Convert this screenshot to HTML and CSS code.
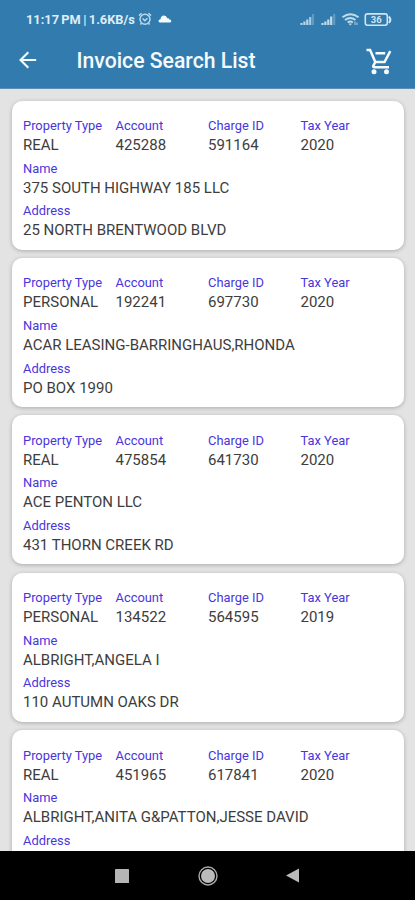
FILE: index.html
```html
<!DOCTYPE html>
<html lang="en">
<head>
<meta charset="utf-8">
<title>Invoice Search List</title>
<link rel="stylesheet" href="styles.css">
</head>
<body>
<div class="phone">
  <header class="top">
    <div class="status">
      <span class="time">11:17 PM | 1.6KB/s</span>
      <svg class="alarm" width="14" height="14" viewBox="0 0 14 14" fill="none" stroke="currentColor"><circle cx="7" cy="7.3" r="5" stroke-width="1.5"/><path d="M1 3.6 3.6 1.2M13 3.6 10.4 1.2M4.6 6.5 6.8 8.7 9.5 6.3M3.4 11.2 2.4 12.5M10.6 11.2l1 1.3" stroke-width="1.5"/></svg>
      <svg class="cloud" width="14" height="10" viewBox="0 0 14 10" fill="currentColor"><path d="M2 8.5Q.3 8.3.5 6.700.8 5.200 2.500 5.200 3 1.500 6 1.500 8.600 1.500 9.300 4.200 11 3.900 11.600 5.500 13.400 5.700 13.300 7.200 13.200 8.500 11.800 8.500Z"/></svg>
      <svg class="system" width="94" height="16" viewBox="0 0 94 16" fill="none" stroke="currentColor">
        <g stroke-width="2.200"><path d="M2.500 14v-2M5.400 14v-3.500M8.300 14V8.500" opacity=".85"/><path d="M11.200 14V6" opacity=".75"/><path d="M14 14V3" opacity=".3"/></g>
        <g stroke-width="2.200"><path d="M23.500 14v-2M26.400 14v-3.500M29.300 14V8.500M32.200 14V5.500" opacity=".9"/><path d="M35.200 14V3" opacity=".3"/></g>
        <g stroke-width="2"><path d="M43.500 6.300Q51.300.3 59.500 6.300M46 9q5.300-4 10.500 0M48.700 11.500q2.600-1.800 5.200 0" opacity=".9"/><path d="M50.200 12.900h2.200l-1.100 1.300zM56 10.500v3.500M58 11.500V14" stroke-width="1" opacity=".8"/></g>
        <path d="M68.500 2.900H86q2.300 0 2.300 2.200v7q0 2.200-2.300 2.200H68.500q-2.200 0-2.200-2.200v-7q0-2.200 2.200-2.200Z" stroke-width="1.600"/><path d="M89.800 5.500q3.200 3.200 0 6.400" stroke-width="2"/>
        <text x="77.300" y="12" text-anchor="middle" class="charge">36</text>
      </svg>
    </div>
    <div class="bar">
      <svg class="back" width="18" height="18" viewBox="0 0 18 18" fill="none" stroke="currentColor" stroke-width="2.100"><path d="M17.200 9H2M9.300 1.200 1.500 9l7.800 7.800"/></svg>
      <h1>Invoice Search List</h1>
      <svg class="cart" width="26" height="27" viewBox="0 0 26 27" fill="none" stroke="currentColor" stroke-width="2.500"><path d="M.5 2h3.600L9.300 14h9.200L24.300 3.200M9.300 14l-2 3.800q-.5 1.400 1.200 1.400H23M9.500 5.200h9.700"/><g fill="currentColor" stroke="none"><circle cx="8" cy="23.800" r="2.500"/><circle cx="20.500" cy="23.800" r="2.500"/></g></svg>
    </div>
  </header>
  <main class="list">
    <article class="card">
      <dl class="grid"><div><dt>Property Type</dt><dd>REAL</dd></div><div><dt>Account</dt><dd>425288</dd></div><div><dt>Charge ID</dt><dd>591164</dd></div><div><dt>Tax Year</dt><dd>2020</dd></div></dl>
      <dl><dt>Name</dt><dd>375 SOUTH HIGHWAY 185 LLC</dd></dl>
      <dl><dt>Address</dt><dd>25 NORTH BRENTWOOD BLVD</dd></dl>
    </article>
    <article class="card">
      <dl class="grid"><div><dt>Property Type</dt><dd>PERSONAL</dd></div><div><dt>Account</dt><dd>192241</dd></div><div><dt>Charge ID</dt><dd>697730</dd></div><div><dt>Tax Year</dt><dd>2020</dd></div></dl>
      <dl><dt>Name</dt><dd>ACAR LEASING-BARRINGHAUS,RHONDA</dd></dl>
      <dl><dt>Address</dt><dd>PO BOX 1990</dd></dl>
    </article>
    <article class="card">
      <dl class="grid"><div><dt>Property Type</dt><dd>REAL</dd></div><div><dt>Account</dt><dd>475854</dd></div><div><dt>Charge ID</dt><dd>641730</dd></div><div><dt>Tax Year</dt><dd>2020</dd></div></dl>
      <dl><dt>Name</dt><dd>ACE PENTON LLC</dd></dl>
      <dl><dt>Address</dt><dd>431 THORN CREEK RD</dd></dl>
    </article>
    <article class="card">
      <dl class="grid"><div><dt>Property Type</dt><dd>PERSONAL</dd></div><div><dt>Account</dt><dd>134522</dd></div><div><dt>Charge ID</dt><dd>564595</dd></div><div><dt>Tax Year</dt><dd>2019</dd></div></dl>
      <dl><dt>Name</dt><dd>ALBRIGHT,ANGELA I</dd></dl>
      <dl><dt>Address</dt><dd>110 AUTUMN OAKS DR</dd></dl>
    </article>
    <article class="card">
      <dl class="grid"><div><dt>Property Type</dt><dd>REAL</dd></div><div><dt>Account</dt><dd>451965</dd></div><div><dt>Charge ID</dt><dd>617841</dd></div><div><dt>Tax Year</dt><dd>2020</dd></div></dl>
      <dl><dt>Name</dt><dd>ALBRIGHT,ANITA G&amp;PATTON,JESSE DAVID</dd></dl>
      <dl><dt>Address</dt></dl>
    </article>
  </main>
  <nav class="nav">
    <svg width="14" height="14" viewBox="0 0 14 14"><rect width="14" height="14" rx=".5" fill="#b5b5b5"/></svg>
    <svg width="20" height="20" viewBox="0 0 20 20"><circle cx="10" cy="10" r="9" fill="none" stroke="#aaa" stroke-width="1.400"/><circle cx="10" cy="10" r="7" fill="#bbb"/></svg>
    <svg width="14" height="15" viewBox="0 0 14 15"><path d="M0 7.500 13 .5v14Z" fill="#bbb"/></svg>
  </nav>
</div>
</body>
</html>
```
FILE: styles.css
```css
* { box-sizing: border-box; }
body, dl, dd, h1 { margin: 0; }
body { font-family: Roboto, sans-serif; background: #e3e3e3; }
.phone { width: 415px; height: 900px; display: flex; flex-direction: column; overflow: hidden; }
.top { height: 89px; flex: none; background: #327bae; color: #f4fbff; border-bottom: 1px solid #5b91b5; }
.status { height: 38px; padding: 0 22px 0 26px; display: flex; align-items: center; }
.time { width: 110px; margin-right: 2px; font-size: 12.800px; word-spacing: -.8px; font-weight: 700; white-space: nowrap; color: #deedf7; }
.alarm { color: #b9d9ed; }
.cloud { margin-left: 6px; }
.system { margin-left: auto; color: #cfe5f3; }
.charge { font-size: 9.500px; font-weight: 700; fill: #cfe5f3; stroke: none; }
.bar { height: 46px; padding: 0 23px 0 19px; display: flex; align-items: center; }
.back { flex: none; margin: 0 39.500px 3px 0; }
h1 { font-size: 21.200px; line-height: 26px; font-weight: 500; white-space: nowrap; }
.cart { margin-left: auto; }
.list { height: 762px; flex: none; padding: 11.500px 11.500px 0 12px; display: flex; flex-direction: column; gap: 8.400px; overflow: hidden; background: #e3e3e3; }
.card { height: 149px; flex: none; padding: 15.600px 11px 0; background: #fff; border-radius: 10px; box-shadow: 0 1px 4px #00000040; }
.card dl { height: 42.600px; }
.grid { display: grid; grid-template-columns: repeat(4, 92.500px); }
dt { height: 20px; line-height: 20px; font-size: 12.900px; color: #4935dc; white-space: nowrap; }
dd { height: 18px; line-height: 18px; font-size: 15px; color: #3d3d3d; white-space: nowrap; }
.nav { height: 49px; flex: none; padding: 0 115px; display: flex; align-items: center; justify-content: space-between; background: #000; }
```
